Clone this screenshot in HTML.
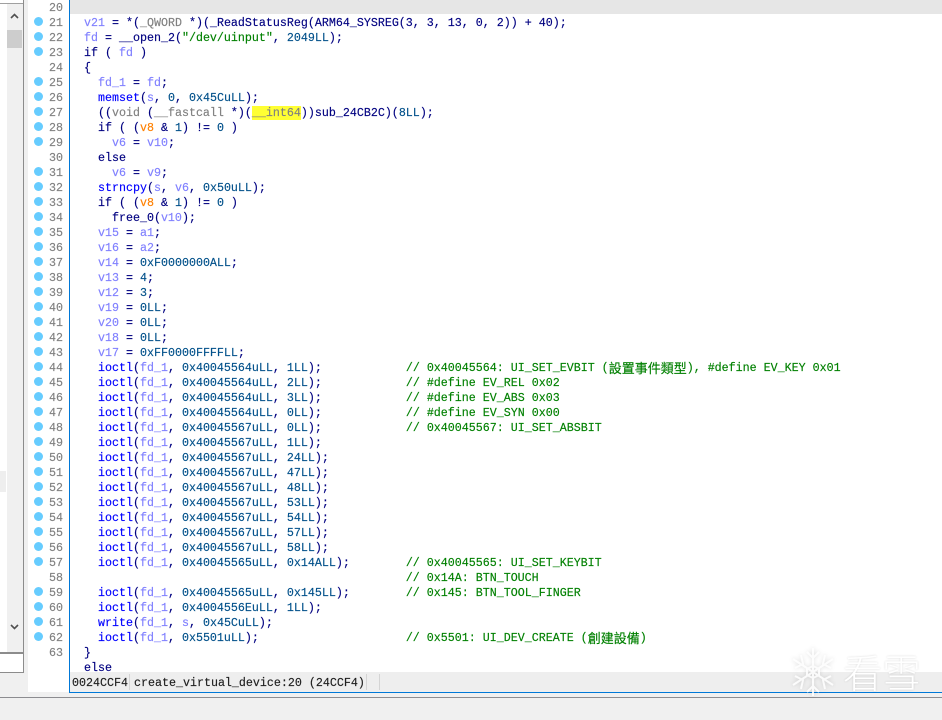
<!DOCTYPE html>
<html><head><meta charset="utf-8"><style>
html,body{margin:0;padding:0;width:942px;height:720px;overflow:hidden;background:#f0f0f0}
.a{position:absolute}
#code{left:70px;top:0;width:872px;height:672px;background:#fff;overflow:hidden}
pre{margin:0;position:absolute;font:11.67px/15px "Liberation Mono","Noto Sans CJK TC",monospace;color:#000080;white-space:pre;-webkit-text-stroke:.15px currentColor}
#c{left:0;top:1px;z-index:2}
#n{left:49px;top:1px;color:#808080;z-index:2}
.v{color:#8080ff}.f{color:#0000ff}.n{color:#00508a}.s{color:#008000}.t{color:#808080}.c{color:#008000}.o{color:#ff8000}
.h{background:#ffff33}
.z{display:inline-block;height:15px;line-height:13px;vertical-align:top;font-size:13px;font-family:"Noto Sans CJK TC",sans-serif}
.d{position:absolute;left:34px;width:9px;height:9px;border-radius:50%;background:#66ccff;z-index:3}
</style></head><body>
<div class="a" style="left:0;top:0;width:23px;height:653px;background:#fff"></div>
<div class="a" style="left:0;top:3px;width:23px;height:1px;background:#a0a0a0"></div>
<div class="a" style="left:7px;top:4px;width:16px;height:649px;background:#f0f0f0"></div>
<div class="a" style="left:7px;top:30px;width:15px;height:18px;background:#cdcdcd"></div>
<svg class="a" style="left:9px;top:12px" width="11" height="8"><path d="M2 6 L5.5 2.5 L9 6" fill="none" stroke="#505050" stroke-width="1.6"/></svg>
<svg class="a" style="left:9px;top:623px" width="11" height="8"><path d="M2 2 L5.5 5.5 L9 2" fill="none" stroke="#505050" stroke-width="1.6"/></svg>
<div class="a" style="left:0;top:471px;width:6px;height:21px;background:#eee"></div>
<div class="a" style="left:0;top:653px;width:23px;height:19px;background:#fff"></div>
<div class="a" style="left:0;top:652px;width:24px;height:2px;background:#8c8c8c"></div>
<div class="a" style="left:0;top:672px;width:24px;height:1px;background:#8c8c8c"></div>
<div class="a" style="left:23px;top:0;width:1px;height:673px;background:#8c8c8c"></div>
<div class="a" style="left:28px;top:0;width:37px;height:692px;background:#fff"></div>
<div class="a" style="left:65px;top:0;width:4px;height:692px;background:#fff"></div>
<div class="a" style="left:69px;top:0;width:1px;height:693px;background:#0078d7"></div>
<div class="a" style="left:69px;top:692px;width:873px;height:1px;background:#0078d7"></div>
<div class="a" style="left:0;top:697px;width:942px;height:1px;background:#8c8c90"></div>
<div class="a" id="code">
<div class="a" style="left:0;top:0;width:872px;height:14px;background:#e6e6e6"></div>
<pre class="a" id="c">

  <span class="v">v21</span> = *(<span class="t">_QWORD</span> *)(_ReadStatusReg(ARM64_SYSREG(3, 3, 13, 0, 2)) + 40);
  <span class="v">fd</span> = __open_2(<span class="s">"/dev/uinput"</span>, <span class="n">2049LL</span>);
  if ( <span class="v">fd</span> )
  {
    <span class="v">fd_1</span> = <span class="v">fd</span>;
    <span class="f">memset</span>(<span class="v">s</span>, <span class="n">0</span>, <span class="n">0x45CuLL</span>);
    ((<span class="t">void</span> (<span class="t">__fastcall</span> *)(<span class="h"><span class="t">__int64</span></span>))sub_24CB2C)(<span class="n">8LL</span>);
    if ( (<span class="o">v8</span> &amp; <span class="n">1</span>) != <span class="n">0</span> )
      <span class="v">v6</span> = <span class="v">v10</span>;
    else
      <span class="v">v6</span> = <span class="v">v9</span>;
    <span class="f">strncpy</span>(<span class="v">s</span>, <span class="v">v6</span>, <span class="n">0x50uLL</span>);
    if ( (<span class="o">v8</span> &amp; <span class="n">1</span>) != <span class="n">0</span> )
      free_0(<span class="v">v10</span>);
    <span class="v">v15</span> = <span class="v">a1</span>;
    <span class="v">v16</span> = <span class="v">a2</span>;
    <span class="v">v14</span> = <span class="n">0xF0000000ALL</span>;
    <span class="v">v13</span> = <span class="n">4</span>;
    <span class="v">v12</span> = <span class="n">3</span>;
    <span class="v">v19</span> = <span class="n">0LL</span>;
    <span class="v">v20</span> = <span class="n">0LL</span>;
    <span class="v">v18</span> = <span class="n">0LL</span>;
    <span class="v">v17</span> = <span class="n">0xFF0000FFFFLL</span>;
    <span class="f">ioctl</span>(<span class="v">fd_1</span>, <span class="n">0x40045564uLL</span>, <span class="n">1LL</span>);            <span class="c">// 0x40045564: UI_SET_EVBIT (<span class="z">設置事件類型</span>), #define EV_KEY 0x01</span>
    <span class="f">ioctl</span>(<span class="v">fd_1</span>, <span class="n">0x40045564uLL</span>, <span class="n">2LL</span>);            <span class="c">// #define EV_REL 0x02</span>
    <span class="f">ioctl</span>(<span class="v">fd_1</span>, <span class="n">0x40045564uLL</span>, <span class="n">3LL</span>);            <span class="c">// #define EV_ABS 0x03</span>
    <span class="f">ioctl</span>(<span class="v">fd_1</span>, <span class="n">0x40045564uLL</span>, <span class="n">0LL</span>);            <span class="c">// #define EV_SYN 0x00</span>
    <span class="f">ioctl</span>(<span class="v">fd_1</span>, <span class="n">0x40045567uLL</span>, <span class="n">0LL</span>);            <span class="c">// 0x40045567: UI_SET_ABSBIT</span>
    <span class="f">ioctl</span>(<span class="v">fd_1</span>, <span class="n">0x40045567uLL</span>, <span class="n">1LL</span>);
    <span class="f">ioctl</span>(<span class="v">fd_1</span>, <span class="n">0x40045567uLL</span>, <span class="n">24LL</span>);
    <span class="f">ioctl</span>(<span class="v">fd_1</span>, <span class="n">0x40045567uLL</span>, <span class="n">47LL</span>);
    <span class="f">ioctl</span>(<span class="v">fd_1</span>, <span class="n">0x40045567uLL</span>, <span class="n">48LL</span>);
    <span class="f">ioctl</span>(<span class="v">fd_1</span>, <span class="n">0x40045567uLL</span>, <span class="n">53LL</span>);
    <span class="f">ioctl</span>(<span class="v">fd_1</span>, <span class="n">0x40045567uLL</span>, <span class="n">54LL</span>);
    <span class="f">ioctl</span>(<span class="v">fd_1</span>, <span class="n">0x40045567uLL</span>, <span class="n">57LL</span>);
    <span class="f">ioctl</span>(<span class="v">fd_1</span>, <span class="n">0x40045567uLL</span>, <span class="n">58LL</span>);
    <span class="f">ioctl</span>(<span class="v">fd_1</span>, <span class="n">0x40045565uLL</span>, <span class="n">0x14ALL</span>);        <span class="c">// 0x40045565: UI_SET_KEYBIT</span>
                                                <span class="c">// 0x14A: BTN_TOUCH</span>
    <span class="f">ioctl</span>(<span class="v">fd_1</span>, <span class="n">0x40045565uLL</span>, <span class="n">0x145LL</span>);        <span class="c">// 0x145: BTN_TOOL_FINGER</span>
    <span class="f">ioctl</span>(<span class="v">fd_1</span>, <span class="n">0x4004556EuLL</span>, <span class="n">1LL</span>);
    <span class="f">write</span>(<span class="v">fd_1</span>, <span class="v">s</span>, <span class="n">0x45CuLL</span>);
    <span class="f">ioctl</span>(<span class="v">fd_1</span>, <span class="n">0x5501uLL</span>);                     <span class="c">// 0x5501: UI_DEV_CREATE (<span class="z">創建設備</span>)</span>
  }
  else
</pre>
</div>
<pre class="a" id="n">20
21
22
23
24
25
26
27
28
29
30
31
32
33
34
35
36
37
38
39
40
41
42
43
44
45
46
47
48
49
50
51
52
53
54
55
56
57
58
59
60
61
62
63</pre>
<div class="d" style="top:17px"></div><div class="d" style="top:32px"></div><div class="d" style="top:47px"></div>
<div class="d" style="top:77px"></div><div class="d" style="top:92px"></div><div class="d" style="top:107px"></div><div class="d" style="top:122px"></div><div class="d" style="top:137px"></div>
<div class="d" style="top:167px"></div><div class="d" style="top:182px"></div><div class="d" style="top:197px"></div><div class="d" style="top:212px"></div><div class="d" style="top:227px"></div><div class="d" style="top:242px"></div><div class="d" style="top:257px"></div><div class="d" style="top:272px"></div><div class="d" style="top:287px"></div><div class="d" style="top:302px"></div><div class="d" style="top:317px"></div><div class="d" style="top:332px"></div><div class="d" style="top:347px"></div><div class="d" style="top:362px"></div><div class="d" style="top:377px"></div><div class="d" style="top:392px"></div><div class="d" style="top:407px"></div><div class="d" style="top:422px"></div><div class="d" style="top:437px"></div><div class="d" style="top:452px"></div><div class="d" style="top:467px"></div><div class="d" style="top:482px"></div><div class="d" style="top:497px"></div><div class="d" style="top:512px"></div><div class="d" style="top:527px"></div><div class="d" style="top:542px"></div><div class="d" style="top:557px"></div>
<div class="d" style="top:587px"></div><div class="d" style="top:602px"></div><div class="d" style="top:617px"></div><div class="d" style="top:632px"></div>
<div class="a" style="left:70px;top:672px;width:872px;height:20px;background:#eee"></div>
<pre class="a" style="left:72px;top:676px;color:#202020;z-index:2">0024CCF4</pre>
<pre class="a" style="left:134px;top:676px;color:#202020;z-index:2">create_virtual_device:20 (24CCF4)</pre>
<div class="a" style="left:129px;top:674px;width:1px;height:16px;background:#d4d4d4"></div>
<div class="a" style="left:366px;top:674px;width:1px;height:16px;background:#d4d4d4"></div>
<div class="a" style="left:379px;top:674px;width:1px;height:16px;background:#d4d4d4"></div>
<svg class="a" style="left:789px;top:646px;z-index:5;filter:drop-shadow(0 0 2px rgba(0,0,0,.16))" width="48" height="52"><g fill="none" stroke="#fff" stroke-width="2" opacity=".85"><path d="M24 2V50M4 13L44 39M44 13L4 39"/><path d="M18 6L24 12L30 6M18 46L24 40L30 46M6 22L14 18L12 9M42 30L34 34L36 43M42 22L34 18L36 9M6 30L14 34L12 43"/><path d="M24 20L30 23V29L24 32L18 29V23Z"/></g></svg>
<div class="a" style="left:843px;top:650px;z-index:5;font:39px/44px 'Noto Sans CJK TC',sans-serif;font-weight:300;color:#fff;text-shadow:0 0 2px rgba(0,0,0,.16);white-space:nowrap">看雪</div>
</body></html>
